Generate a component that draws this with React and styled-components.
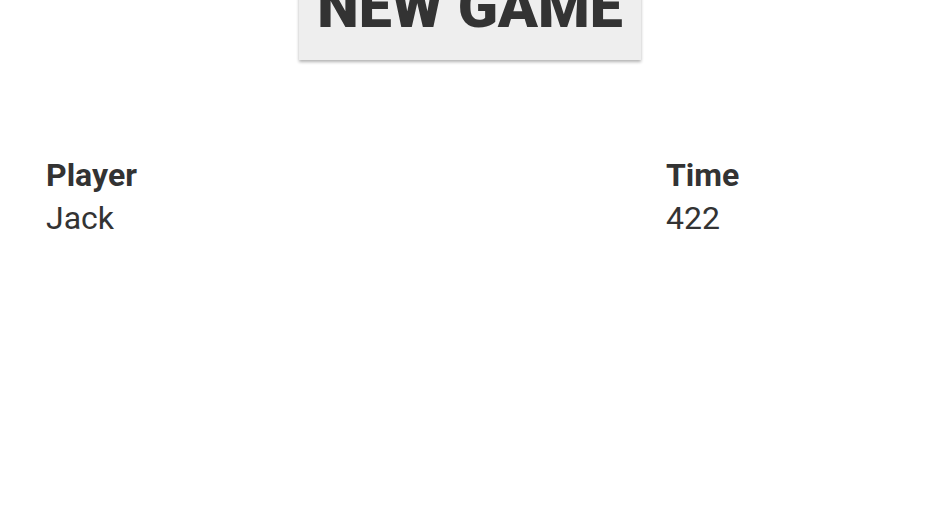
import React from "react";
import styled, { createGlobalStyle } from "styled-components";

const Global = createGlobalStyle`
  html, body { margin: 0; padding: 0; background: #fff; }
  body { font-family: Roboto, "Noto Sans", sans-serif; color: #333; }
`;

const Page = styled.div`
  display: flex;
  flex-direction: column;
  align-items: center;
`;

const Button = styled.button`
  margin-top: -43px;
  font-family: Roboto, sans-serif;
  font-weight: 900;
  font-size: 59px;
  line-height: 1;
  color: #333;
  background: #eeeeee;
  border: none;
  padding: 20px 18px 24px;
  box-shadow: 0 2px 3px rgba(0, 0, 0, 0.3);
  cursor: pointer;
`;

const Table = styled.div`
  align-self: stretch;
  margin: 94px 46px 0;
  display: grid;
  grid-template-columns: 620px auto;
`;

const Head = styled.div`
  font-weight: 700;
  font-size: 32px;
  line-height: 43px;
`;

const Cell = styled.div`
  font-weight: 400;
  font-size: 32px;
  line-height: 43px;
`;

export default function App() {
  return (
    <>
      <Global />
      <Page>
        <Button>NEW GAME</Button>
        <Table>
          <Head>Player</Head>
          <Head>Time</Head>
          <Cell>Jack</Cell>
          <Cell>422</Cell>
        </Table>
      </Page>
    </>
  );
}
